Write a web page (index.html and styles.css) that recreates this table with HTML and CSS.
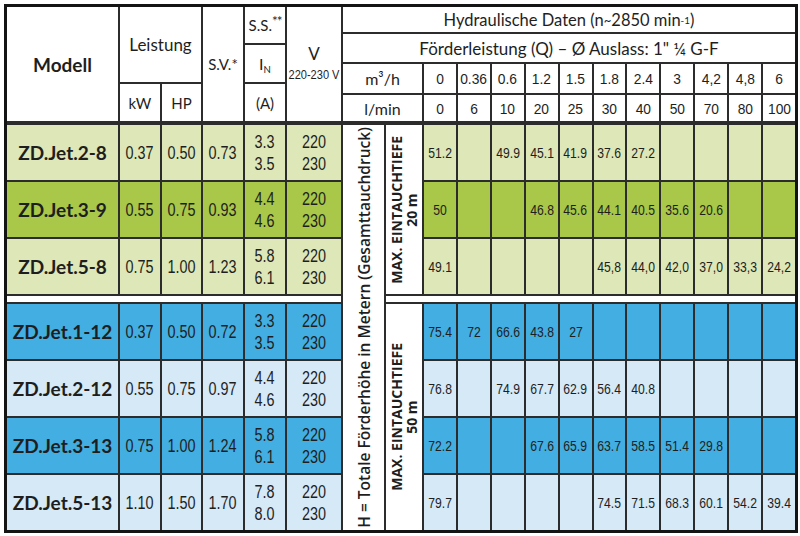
FILE: index.html
```html
<!DOCTYPE html>
<html lang="de">
<head>
<meta charset="utf-8">
<title>ZD.Jet Tabelle</title>
<link rel="stylesheet" href="styles.css">
</head>
<body>
<div class="tbl">
  <div class="head">
    <div class="h-model">Modell</div>
    <div class="h-leist">Leistung</div>
    <div class="h-kw">kW</div>
    <div class="h-hp">HP</div>
    <div class="h-sv">S.V.*</div>
    <div class="h-ss">S.S.<span class="ast">**</span></div>
    <div class="h-in"><span>I<span class="sb">N</span></span></div>
    <div class="h-a">(A)</div>
    <div class="h-v"><span>V<br><small>220-230 V</small></span></div>
    <div class="h-hyd">Hydraulische Daten (n<span class="tl">~</span>2850 min<sup>-1</sup>)</div>
    <div class="h-ford">Förderleistung (Q) – Ø Auslass: 1" ¼ G-F</div>
    <div class="h-m3">m³/h</div>
    <div class="mq"><span>0</span></div>
    <div class="mq"><span>0.36</span></div>
    <div class="mq"><span>0.6</span></div>
    <div class="mq"><span>1.2</span></div>
    <div class="mq"><span>1.5</span></div>
    <div class="mq"><span>1.8</span></div>
    <div class="mq"><span>2.4</span></div>
    <div class="mq"><span>3</span></div>
    <div class="mq"><span>4,2</span></div>
    <div class="mq"><span>4,8</span></div>
    <div class="mq"><span>6</span></div>
    <div class="h-lm">l/min</div>
    <div class="lm"><span>0</span></div>
    <div class="lm"><span>6</span></div>
    <div class="lm"><span>10</span></div>
    <div class="lm"><span>20</span></div>
    <div class="lm"><span>25</span></div>
    <div class="lm"><span>30</span></div>
    <div class="lm"><span>40</span></div>
    <div class="lm"><span>50</span></div>
    <div class="lm"><span>70</span></div>
    <div class="lm"><span>80</span></div>
    <div class="lm"><span>100</span></div>
  </div>

  <div class="body">
    <div class="hcol"><span>H = Totale Förderhöhe in Metern (Gesamttauchdruck)</span></div>
    <div class="max1"><span>MAX. EINTAUCHTIEFE<br>20 m</span></div>
    <div class="band-l"></div>
    <div class="band-r"></div>
    <div class="max2"><span>MAX. EINTAUCHTIEFE<br>50 m</span></div>

    <div class="r lg">
      <div class="mdl">ZD.Jet.2-8</div>
      <div><span>0.37</span></div><div><span>0.50</span></div><div><span>0.73</span></div>
      <div><span>3.3<br>3.5</span></div><div><span>220<br>230</span></div>
      <div><span>51.2</span></div><div></div><div><span>49.9</span></div><div><span>45.1</span></div><div><span>41.9</span></div>
      <div><span>37.6</span></div><div><span>27.2</span></div><div></div><div></div><div></div><div></div>
    </div>
    <div class="r dg">
      <div class="mdl">ZD.Jet.3-9</div>
      <div><span>0.55</span></div><div><span>0.75</span></div><div><span>0.93</span></div>
      <div><span>4.4<br>4.6</span></div><div><span>220<br>230</span></div>
      <div><span>50</span></div><div></div><div></div><div><span>46.8</span></div><div><span>45.6</span></div>
      <div><span>44.1</span></div><div><span>40.5</span></div><div><span>35.6</span></div><div><span>20.6</span></div><div></div><div></div>
    </div>
    <div class="r lg">
      <div class="mdl">ZD.Jet.5-8</div>
      <div><span>0.75</span></div><div><span>1.00</span></div><div><span>1.23</span></div>
      <div><span>5.8<br>6.1</span></div><div><span>220<br>230</span></div>
      <div><span>49.1</span></div><div></div><div></div><div></div><div></div>
      <div><span>45,8</span></div><div><span>44,0</span></div><div><span>42,0</span></div><div><span>37,0</span></div><div><span>33,3</span></div><div><span>24,2</span></div>
    </div>

    <div class="r db">
      <div class="mdl">ZD.Jet.1-12</div>
      <div><span>0.37</span></div><div><span>0.50</span></div><div><span>0.72</span></div>
      <div><span>3.3<br>3.5</span></div><div><span>220<br>230</span></div>
      <div><span>75.4</span></div><div><span>72</span></div><div><span>66.6</span></div><div><span>43.8</span></div><div><span>27</span></div>
      <div></div><div></div><div></div><div></div><div></div><div></div>
    </div>
    <div class="r lb">
      <div class="mdl">ZD.Jet.2-12</div>
      <div><span>0.55</span></div><div><span>0.75</span></div><div><span>0.97</span></div>
      <div><span>4.4<br>4.6</span></div><div><span>220<br>230</span></div>
      <div><span>76.8</span></div><div></div><div><span>74.9</span></div><div><span>67.7</span></div><div><span>62.9</span></div>
      <div><span>56.4</span></div><div><span>40.8</span></div><div></div><div></div><div></div><div></div>
    </div>
    <div class="r db">
      <div class="mdl">ZD.Jet.3-13</div>
      <div><span>0.75</span></div><div><span>1.00</span></div><div><span>1.24</span></div>
      <div><span>5.8<br>6.1</span></div><div><span>220<br>230</span></div>
      <div><span>72.2</span></div><div></div><div></div><div><span>67.6</span></div><div><span>65.9</span></div>
      <div><span>63.7</span></div><div><span>58.5</span></div><div><span>51.4</span></div><div><span>29.8</span></div><div></div><div></div>
    </div>
    <div class="r lb">
      <div class="mdl">ZD.Jet.5-13</div>
      <div><span>1.10</span></div><div><span>1.50</span></div><div><span>1.70</span></div>
      <div><span>7.8<br>8.0</span></div><div><span>220<br>230</span></div>
      <div><span>79.7</span></div><div></div><div></div><div></div><div></div>
      <div><span>74.5</span></div><div><span>71.5</span></div><div><span>68.3</span></div><div><span>60.1</span></div><div><span>54.2</span></div><div><span>39.4</span></div>
    </div>
  </div>
</div>
</body>
</html>
```

FILE: styles.css
```css
* { box-sizing: border-box; margin: 0; padding: 0; }

body {
  margin: 0;
  background: #fff;
  color: #1e1e1e;
  font-family: Lato, "Open Sans", sans-serif;
}

.tbl {
  margin: 4px 0 0 4px;
  width: 794px;
  border: 3px solid #141414;
  background: #2c2c2c;
}

.head,
.body {
  display: grid;
  grid-template-columns: 111px 40px 39px 40px 40px 54px 41px 36px repeat(11, 1fr);
  gap: 2px;
}

.head {
  grid-template-rows: 25px 9px 17px 18px 9px 26px;
  margin-bottom: 4px;
}

.body {
  grid-template-rows: 55px 55px 55px 6px 55px 55px 55px 55px;
}

.head > div,
.body > div,
.r > div {
  background: #fff;
  display: flex;
  align-items: center;
  justify-content: center;
  text-align: center;
}

.body > div.r { display: contents; }

/* header placement */
.h-model { grid-column: 1; grid-row: 1 / 7; font-weight: 700; font-size: 19px; }
.h-leist { grid-column: 2 / 4; grid-row: 1 / 5; font-size: 17px; }
.h-kw { grid-column: 2; grid-row: 5 / 7; font-size: 15px; }
.h-hp { grid-column: 3; grid-row: 5 / 7; font-size: 15px; }
.h-sv { grid-column: 4; grid-row: 1 / 7; font-size: 15px; }
.h-ss { grid-column: 5; grid-row: 1 / 3; font-size: 15px; }
.h-in { grid-column: 5; grid-row: 3 / 5; font-size: 16px; }
.h-a { grid-column: 5; grid-row: 5 / 7; font-size: 15px; }
.h-v { grid-column: 6; grid-row: 1 / 7; font-size: 17px; line-height: 1.1; }
.h-v small {
  display: inline-block;
  white-space: nowrap;
  font-family: "Liberation Sans Narrow", "Liberation Sans", sans-serif;
  font-size: 13px;
  transform: scaleX(.85);
  margin: 0 -6px;
}
.h-hyd { grid-column: 7 / 20; grid-row: 1; font-size: 16.5px; }
.h-ford { grid-column: 7 / 20; grid-row: 2 / 4; font-size: 17px; }
.h-m3 { grid-column: 7 / 9; grid-row: 4 / 6; font-size: 16px; }
.h-lm { grid-column: 7 / 9; grid-row: 6; font-size: 16px; }
.mq { grid-row: 4 / 6; }
.lm { grid-row: 6; }

.head sup { font-size: .6em; vertical-align: .55em; }
.ast { font-size: .9em; position: relative; top: -.3em; letter-spacing: -1px; }
.sb { font-size: .6em; position: relative; top: .3em; }
.tl { font-size: .8em; vertical-align: .3em; }

.mq span,
.lm span {
  display: inline-block;
  font-family: "Liberation Sans Narrow", "Liberation Sans", sans-serif;
  font-size: 15px;
  transform: scaleX(.92);
}

/* body placement */
.hcol { grid-column: 7; grid-row: 1 / 9; }
.max1 { grid-column: 8; grid-row: 1 / 4; }
.max2 { grid-column: 8; grid-row: 5 / 9; }
.band-l { grid-column: 1 / 7; grid-row: 4; }
.band-r { grid-column: 8 / 20; grid-row: 4; }

.hcol span,
.max1 span,
.max2 span {
  writing-mode: vertical-rl;
  transform: rotate(180deg);
  white-space: nowrap;
  font-family: "Open Sans", sans-serif;
}
.hcol span { font-weight: 600; font-size: 15.5px; }
.max1 span,
.max2 span { font-weight: 700; font-size: 14px; line-height: 1.1; }

.mdl { font-weight: 700; font-size: 19px; }

.r > div > span {
  display: inline-block;
  font-family: "Liberation Sans Narrow", "Liberation Sans", sans-serif;
  font-size: 18px;
  line-height: 22px;
  transform: scaleX(.8);
}
.r > div:nth-child(n+7) > span {
  font-size: 14.5px;
  transform: scaleX(.84);
}

.lg > div { background: #dde7b7; }
.dg > div { background: #a9c748; }
.db > div { background: #43aee1; }
.lb > div { background: #d6e9f7; }
```
